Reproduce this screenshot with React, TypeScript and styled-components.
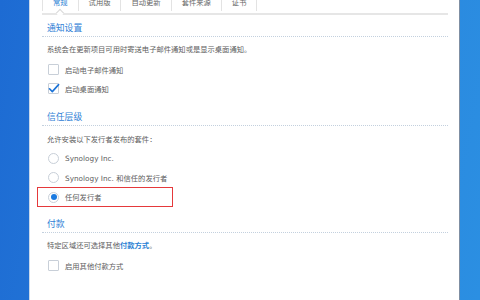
import styled, { createGlobalStyle } from 'styled-components';

const GlobalStyle = createGlobalStyle`
	html, body {
		margin: 0;
		padding: 0;
	}
	body {
		font-family: "DejaVu Sans", "Noto Sans CJK SC", sans-serif;
		font-size: 7.3px;
		color: #5f5f5f;
	}
`;

const Desktop = styled.div`
	display: flex;
	width: 480px;
	height: 300px;
	overflow: hidden;
	padding: 0 20px 0 29px;
	box-sizing: border-box;
	background: linear-gradient(100deg, #1d6bd3 0%, #2a83dc 60%, #2b8fe2 100%);
`;

const Panel = styled.div`
	flex: 1;
	background: #ffffff;
	border-left: 1px solid #c9d8ea;
	border-right: 1px solid #7f8fa3;
	padding: 0 11px 0 12px;
	overflow: hidden;
`;

const TabBar = styled.div`
	position: relative;
	display: flex;
	margin-top: -8px;
	padding-bottom: 2px;
	border-bottom: 2px solid #e6e6e6;
`;

const Tab = styled.div<{ $active?: boolean }>`
	position: relative;
	height: 19px;
	padding: 6px 10px 0;
	box-sizing: border-box;
	line-height: 9px;
	border-right: 1px solid #e3e3e3;
	color: ${(p) => (p.$active ? '#2a7fd4' : '#666')};
	white-space: nowrap;

	&:first-child {
		border-left: 1px solid #e3e3e3;
	}

	${(p) =>
		p.$active &&
		`
		&::after {
			content: '';
			position: absolute;
			left: 50%;
			bottom: -5px;
			width: 5px;
			height: 5px;
			margin-left: -3px;
			background: #fff;
			border-top: 1px solid #d8d8d8;
			border-left: 1px solid #d8d8d8;
			transform: rotate(45deg);
		}
	`}
`;

const Section = styled.div<{ $gap: number }>`
	margin-top: ${(p) => p.$gap}px;
`;

const Heading = styled.div`
	padding-left: 5px;
	font-size: 8.8px;
	line-height: 14px;
	padding-bottom: 1px;
	color: #2f80d6;
	border-bottom: 1px dotted #c3d0de;
`;

const Desc = styled.div<{ $gap?: number }>`
	margin-top: ${(p) => p.$gap ?? 7}px;
	padding-left: 5px;
	line-height: 12px;
	color: #606060;

	b {
		color: #2a7fd4;
	}
`;

const List = styled.div<{ $gap: number }>`
	margin-top: ${(p) => p.$gap}px;
	display: flex;
	flex-direction: column;
`;

const Option = styled.label<{ $highlight?: boolean }>`
	display: flex;
	align-items: center;
	gap: 6px;
	height: 19px;
	padding-left: 6px;
	color: #606060;
	box-sizing: border-box;

	${(p) =>
		p.$highlight &&
		`
		width: 136px;
		height: 20px;
		margin-left: -5px;
		padding-left: 10px;
		border: 1.5px solid #e5393b;
	`}
`;

const Box = styled.span<{ $checked?: boolean }>`
	position: relative;
	flex: none;
	width: 11px;
	height: 11px;
	box-sizing: border-box;
	border: 1px solid #c8cfd8;
	border-radius: 1px;
	background: #fff;

	svg {
		position: absolute;
		left: -1px;
		top: -1px;
	}
`;

const Radio = styled.span<{ $checked?: boolean }>`
	flex: none;
	display: flex;
	align-items: center;
	justify-content: center;
	width: 11px;
	height: 11px;
	box-sizing: border-box;
	border: 1px solid #c8cfd8;
	border-radius: 50%;
	background: #fff;

	&::after {
		content: '';
		display: ${(p) => (p.$checked ? 'block' : 'none')};
		width: 6px;
		height: 6px;
		border-radius: 50%;
		background: #1b7ae0;
	}
`;

const Check = () => (
	<svg width="12" height="11" viewBox="0 0 12 11">
		<path d="M1.5 5.8 L4.3 8.6 L10.6 1.6" fill="none" stroke="#1b73d8" strokeWidth="1.6" strokeLinecap="round" strokeLinejoin="round" />
	</svg>
);

const tabs = ['常规', '试用版', '自动更新', '套件来源', '证书'];

export default function App() {
	return (
		<>
			<GlobalStyle />
			<Desktop>
				<Panel>
					<TabBar>
						{tabs.map((t, i) => (
							<Tab key={t} $active={i === 0}>
								{t}
							</Tab>
						))}
					</TabBar>

					<Section $gap={6}>
						<Heading>通知设置</Heading>
						<Desc>系统会在更新项目可用时寄送电子邮件通知或是显示桌面通知。</Desc>
						<List $gap={4}>
							<Option>
								<Box />
								启动电子邮件通知
							</Option>
							<Option>
								<Box $checked>
									<Check />
								</Box>
								启动桌面通知
							</Option>
						</List>
					</Section>

					<Section $gap={12}>
						<Heading>信任层级</Heading>
						<Desc $gap={8}>允许安装以下发行者发布的套件：</Desc>
						<List $gap={3}>
							<Option>
								<Radio />
								Synology Inc.
							</Option>
							<Option>
								<Radio />
								Synology Inc. 和信任的发行者
							</Option>
							<Option $highlight>
								<Radio $checked />
								任何发行者
							</Option>
						</List>
					</Section>

					<Section $gap={10}>
						<Heading>付款</Heading>
						<Desc>
							特定区域还可选择其他<b>付款方式</b>。
						</Desc>
						<List $gap={4}>
							<Option>
								<Box />
								启用其他付款方式
							</Option>
						</List>
					</Section>
				</Panel>
			</Desktop>
		</>
	);
}
